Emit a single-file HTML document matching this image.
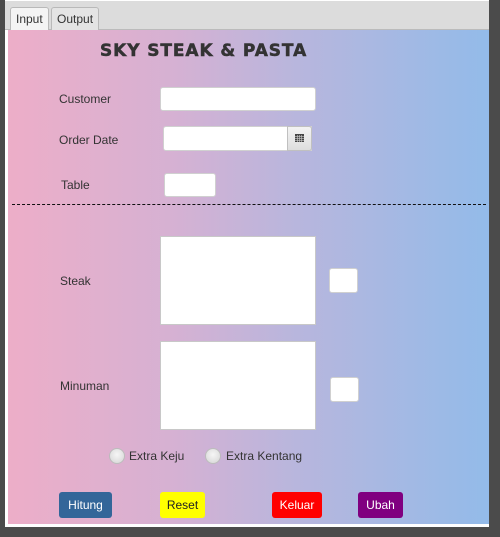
<!DOCTYPE html>
<html><head><style>
*{margin:0;padding:0;box-sizing:border-box}
body{width:500px;height:537px;background:#4b4b4b;position:relative;overflow:hidden;font-family:"Liberation Sans",sans-serif;font-size:12px;color:#333}
.a{position:absolute}
#panel{left:5px;top:0;width:484px;height:527px;background:#fff}
#strip{left:5px;top:1px;width:484px;height:29px;background:#dcdcdc;border-bottom:1px solid #bbb}
.tab{top:7px;height:23px;border:1px solid #b9b9b9;border-bottom:none;border-radius:3px 3px 0 0;background:#e4e4e4;padding:4px 5px;font-size:12px;color:#333}
#grad{left:8px;top:30px;width:481px;height:494px;background:linear-gradient(90deg,#edaec8 0%,#d5b1d3 35%,#b8b6dd 60%,#93bbe9 100%)}
.lbl{font-size:12px;color:#333}
.box{background:#fff;border:1px solid #d0d0d0;border-radius:3px}
.btn{height:26px;border-radius:3px;font-size:12px;text-align:center;line-height:26px}
.radio{width:16px;height:16px;border-radius:50%;background:radial-gradient(circle at 50% 40%,#f6f6f6,#d4d4d4);border:1px solid #bcbcbc}
</style></head><body>
<div class="a" id="panel"></div>
<div class="a" id="strip"></div>
<div class="a tab" style="left:10px;width:39px;background:#f4f4f4;height:24px">Input</div>
<div class="a tab" style="left:51px;width:48px">Output</div>
<div class="a" id="grad"></div>
<div class="a" style="left:100px;top:41px;font-family:'DejaVu Sans',sans-serif;font-weight:bold;font-size:17px;letter-spacing:0.9px;color:#333;-webkit-text-stroke:0.5px #333">SKY STEAK &amp; PASTA</div>
<div class="a lbl" style="left:59px;top:92px">Customer</div>
<div class="a box" style="left:160px;top:87px;width:156px;height:24px"></div>
<div class="a lbl" style="left:59px;top:133px">Order Date</div>
<div class="a box" style="left:163px;top:126px;width:149px;height:25px;border-radius:3px 0 0 3px"></div>
<div class="a" style="left:287px;top:126px;width:25px;height:25px;background:linear-gradient(#f3f3f3,#dedede);border:1px solid #c0c0c0;border-radius:0 3px 3px 0"></div>
<svg class="a" style="left:295px;top:134px" width="9" height="8" viewBox="0 0 9 8"><rect width="9" height="8" fill="#444"/><g fill="#ccc"><rect x="0" y="2" width="9" height="1" opacity=".6"/><rect x="0" y="4" width="9" height="1" opacity=".6"/><rect x="0" y="6" width="9" height="1" opacity=".6"/><rect x="2" y="1" width="1" height="7" opacity=".6"/><rect x="4" y="1" width="1" height="7" opacity=".6"/><rect x="6" y="1" width="1" height="7" opacity=".6"/></g></svg>
<div class="a lbl" style="left:61px;top:178px">Table</div>
<div class="a box" style="left:164px;top:173px;width:52px;height:24px"></div>
<div class="a" style="left:12px;top:204px;width:474px;border-top:1px dashed #111"></div>
<div class="a lbl" style="left:60px;top:274px">Steak</div>
<div class="a" style="left:160px;top:236px;width:156px;height:89px;background:#fff;border:1px solid #c8c8c8"></div>
<div class="a box" style="left:329px;top:268px;width:29px;height:25px"></div>
<div class="a lbl" style="left:60px;top:379px">Minuman</div>
<div class="a" style="left:160px;top:341px;width:156px;height:89px;background:#fff;border:1px solid #c8c8c8"></div>
<div class="a box" style="left:330px;top:377px;width:29px;height:25px"></div>
<div class="a radio" style="left:109px;top:448px"></div>
<div class="a lbl" style="left:129px;top:449px">Extra Keju</div>
<div class="a radio" style="left:205px;top:448px"></div>
<div class="a lbl" style="left:226px;top:449px">Extra Kentang</div>
<div class="a btn" style="left:59px;top:492px;width:53px;background:#336699;color:#fff">Hitung</div>
<div class="a btn" style="left:160px;top:492px;width:45px;background:#ffff00;color:#222">Reset</div>
<div class="a btn" style="left:272px;top:492px;width:50px;background:#ff0000;color:#fff">Keluar</div>
<div class="a btn" style="left:358px;top:492px;width:45px;background:#800080;color:#fff">Ubah</div>
</body></html>
